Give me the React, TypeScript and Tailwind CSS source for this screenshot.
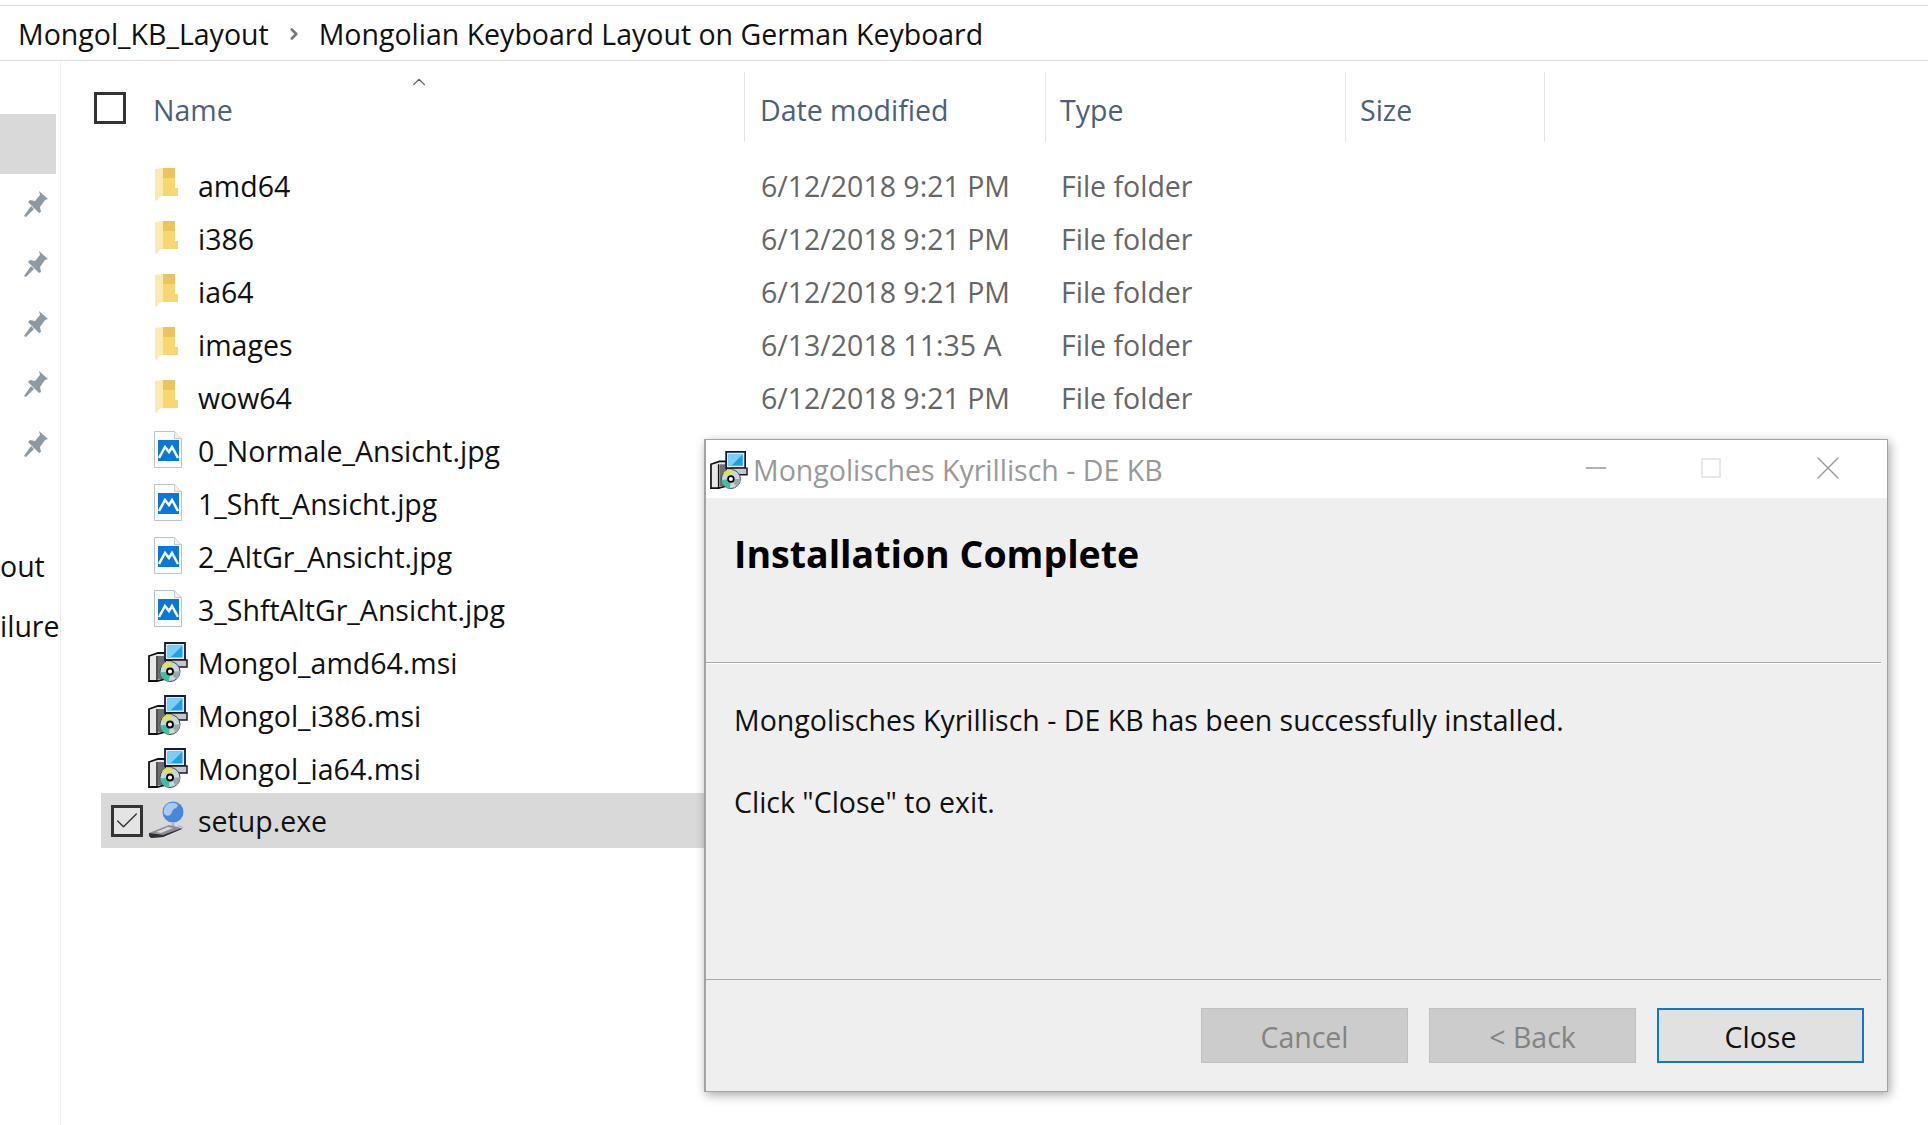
import { Check, ChevronRight, ChevronUp, Minus, X } from 'lucide-react'

type FileKind = 'folder' | 'image' | 'msi' | 'exe'

interface FileRow {
  name: string
  kind: FileKind
  date?: string
  type?: string
  selected?: boolean
}

const files: FileRow[] = [
  { name: 'amd64', kind: 'folder', date: '6/12/2018 9:21 PM', type: 'File folder' },
  { name: 'i386', kind: 'folder', date: '6/12/2018 9:21 PM', type: 'File folder' },
  { name: 'ia64', kind: 'folder', date: '6/12/2018 9:21 PM', type: 'File folder' },
  { name: 'images', kind: 'folder', date: '6/13/2018 11:35 A', type: 'File folder' },
  { name: 'wow64', kind: 'folder', date: '6/12/2018 9:21 PM', type: 'File folder' },
  { name: '0_Normale_Ansicht.jpg', kind: 'image' },
  { name: '1_Shft_Ansicht.jpg', kind: 'image' },
  { name: '2_AltGr_Ansicht.jpg', kind: 'image' },
  { name: '3_ShftAltGr_Ansicht.jpg', kind: 'image' },
  { name: 'Mongol_amd64.msi', kind: 'msi' },
  { name: 'Mongol_i386.msi', kind: 'msi' },
  { name: 'Mongol_ia64.msi', kind: 'msi' },
  { name: 'setup.exe', kind: 'exe', selected: true },
]

const FolderIcon = () => (
  <svg width="26" height="36" viewBox="0 0 26 36" className="ml-[6px]">
    <path d="M8 1h13v10H8z" fill="#ecc35f" />
    <path d="M8 11h13v10h3v8H8z" fill="#f8d672" />
    <path d="M1 2l8-1v28l-4 1-2 4-2-1z" fill="#fce9b0" />
  </svg>
)

const ImageIcon = () => (
  <svg width="28" height="37" viewBox="0 0 28 37" className="ml-[6px]">
    <path d="M.5.5h20l7 7v29H.5z" fill="#fbfdff" stroke="#b9c3cc" />
    <path d="M20.5.5v7h7" fill="#eef1f4" stroke="#c4ccd4" />
    <rect x="4" y="9" width="21" height="21" fill="#0a78d7" />
    <path d="M5 27l6-11 4 5 3-5 6 11" fill="none" stroke="#fff" strokeWidth="2.500" />
  </svg>
)

const InstallerIcon = ({ size = 40 }: { size?: number }) => (
  <svg width={size} height={size} viewBox="0 0 40 40">
    <path d="M1 14l9-3h7v26l-8 2H1z" fill="#e8e8e8" stroke="#111" strokeWidth="1.800" />
    <path d="M9 14v25" stroke="#111" strokeWidth="1.400" />
    <path d="M10 14h7v23h-7z" fill="#6f6f6f" />
    <path d="M17 1h20v17H17z" fill="#e4e9f3" stroke="#101a45" strokeWidth="1.800" />
    <rect x="19.500" y="3.500" width="15" height="12" fill="#1f9fe8" />
    <path d="M19.500 3.500h15l-12 12h-3z" fill="#79d0f6" />
    <path d="M23 18h16v7H23z" fill="#c6c6cf" stroke="#1c1c28" strokeWidth="1.500" />
    <circle cx="22" cy="29.500" r="10" fill="#c9d6da" stroke="#3f4a50" />
    <path d="M22 29.500L14 23.500a10 10 0 0 1 10-4z" fill="#dfe05f" />
    <path d="M22 29.500l-1 10a10 10 0 0 1-9-9z" fill="#3fbfa6" />
    <path d="M22 29.500l10 0a10 10 0 0 1-4 8z" fill="#9aa7ad" />
    <circle cx="22" cy="29.500" r="3" fill="#fff" stroke="#000" strokeWidth="1.800" />
  </svg>
)

const SetupIcon = () => (
  <svg width="40" height="40" viewBox="0 0 40 40">
    <circle cx="25" cy="12" r="10.500" fill="#4a86d8" />
    <path d="M18 5c4-3 9-3 12 0-1 4-5 3-6 7s-5 5-8 2c-1-3 0-6 2-9z" fill="#a9c9f0" />
    <path d="M25 22v6" stroke="#a7b4d8" strokeWidth="2.500" />
    <path d="M1 33l20-8 13 3-19 9-12 1z" fill="#8d8f94" />
    <path d="M1 33v3l2 2 12-1 19-8v-1l-19 7z" fill="#2e2e33" />
    <path d="M8 32l12-5 5 1-12 5z" fill="#d8d8dc" />
    <path d="M30 26l5 2" stroke="#b7b6ef" strokeWidth="2" />
  </svg>
)

const PinIcon = () => (
  <svg width="26" height="28" viewBox="0 0 26 28" className="ml-[23px]">
    <path d="M16 1l9 8-3 1-5 7 1 5-2 1-11-11 2-2 5 1 5-6z" fill="#8e9aa3" />
    <path d="M8 16L1 26l2 1 8-8z" fill="#8e9aa3" />
  </svg>
)

const fileIcons: Record<FileKind, React.ReactNode> = {
  folder: <FolderIcon />,
  image: <ImageIcon />,
  msi: <InstallerIcon />,
  exe: <SetupIcon />,
}

const Row = ({ file }: { file: FileRow }) => (
  <div
    className={
      file.selected
        ? 'flex h-[55px] w-[700px] -mt-[3px] items-center bg-[#d9d9d9] pt-[2px]'
        : 'flex h-[53px] items-center'
    }
  >
    <div className="w-[47px] shrink-0 pl-[10px] -mt-[2px]">
      {file.selected && (
        <div className="flex h-8 w-8 items-center justify-center border-[3px] border-[#333] bg-[#e4e4e4]">
          <Check size={28} strokeWidth={1.2} color="#333" className="shrink-0" />
        </div>
      )}
    </div>
    <div className="-mt-[4px] flex h-10 w-[50px] shrink-0 items-center">{fileIcons[file.kind]}</div>
    <div className="w-[563px] shrink-0 whitespace-nowrap text-[#111]">{file.name}</div>
    {file.date && <div className="w-[300px] shrink-0 text-[#666]">{file.date}</div>}
    {file.type && <div className="text-[#666]">{file.type}</div>}
  </div>
)

const Explorer = () => (
  <div className="h-[1125px] overflow-hidden bg-white font-['Open_Sans',sans-serif] text-[28.5px]">
    <div className="mt-[5px] flex h-[56px] items-center border-y border-[#dcdcdc] pl-[18px] pt-[2px] text-[#111]">
      <span>Mongol_KB_Layout</span>
      <ChevronRight size={18} strokeWidth={3.5} color="#777" className="mx-[16px]" />
      <span>Mongolian Keyboard Layout on German Keyboard</span>
    </div>

    <div className="flex">
      {/* Navigation pane, cut off by the crop */}
      <div className="h-[1064px] w-[61px] shrink-0 border-r border-[#f0f0f0] pt-[53px] text-[#111]">
        <div className="h-[60px] w-[56px] bg-[#d9d9d9]" />
        {[0, 1, 2, 3, 4].map((i) => (
          <div key={i} className="flex h-[60px] items-center">
            <PinIcon />
          </div>
        ))}
        <div className="mt-[62px] flex h-[60px] items-center overflow-hidden">out</div>
        <div className="flex h-[60px] items-center overflow-hidden">ilure</div>
      </div>

      <div className="flex-1">
        <div className="mt-[11px] flex h-[70px] items-center text-[#4c607a]">
          <div className="ml-[33px] mt-[2px] h-8 w-8 shrink-0 border-[3px] border-[#333]" />
          <div className="relative ml-[27px] flex h-full w-[592px] shrink-0 items-center border-r border-[#e5e5e5] pt-[7px]">
            Name
            <ChevronUp size={22} strokeWidth={1.2} color="#666" className="absolute left-[255px] top-[-1px]" />
          </div>
          <div className="flex h-full w-[301px] shrink-0 items-center border-r border-[#e5e5e5] pl-[15px] pt-[7px]">Date modified</div>
          <div className="flex h-full w-[300px] shrink-0 items-center border-r border-[#e5e5e5] pl-[14px] pt-[7px]">Type</div>
          <div className="flex h-full w-[199px] shrink-0 items-center border-r border-[#e5e5e5] pl-[14px] pt-[7px]">Size</div>
        </div>
        <div className="ml-[40px] mt-[18px]">
          {files.map((file) => (
            <Row key={file.name} file={file} />
          ))}
        </div>
      </div>
    </div>
  </div>
)

const DialogButton = ({ label, primary }: { label: string; primary?: boolean }) => (
  <div
    className={
      primary
        ? 'flex h-[55px] w-[207px] items-center justify-center border-2 border-[#0f78c8] bg-[#e1e1e1] pt-[4px] text-[#111]'
        : 'flex h-[55px] w-[207px] items-center justify-center border border-[#bfbfbf] bg-[#cccccc] pt-[4px] text-[#838383]'
    }
  >
    {label}
  </div>
)

const InstallDialog = () => (
  <div className="absolute left-[704px] top-[439px] flex h-[653px] w-[1184px] flex-col border border-l-2 border-[#a3a3a3] bg-[#efefef] font-['Open_Sans',sans-serif] text-[28.5px] shadow-[2px_3px_10px_rgba(0,0,0,0.35)]">
    <div className="flex h-[58px] shrink-0 items-center bg-white text-[#999]">
      <div className="ml-[4px] mr-[5px] mt-[1px]">
        <InstallerIcon size={38} />
      </div>
      <span className="pt-[2px]">Mongolisches Kyrillisch - DE KB</span>
      <Minus size={34} strokeWidth={0.9} color="#999" className="absolute left-[873px] top-[11px]" />
      <div className="absolute left-[995px] top-[18px] h-5 w-5 border-2 border-[#e8e8e8]" />
      <X size={40} strokeWidth={0.8} color="#999" className="absolute left-[1102px] top-[8px]" />
    </div>

    <div className="mr-[6px] flex h-[165px] shrink-0 items-start border-b border-[#a9a9a9] pl-[28px] pt-[31px]">
      <span className="text-[37.500px] font-bold leading-[50px] text-black">Installation Complete</span>
    </div>

    <div className="mr-[6px] flex h-[317px] shrink-0 flex-col border-t border-b border-t-white border-b-[#a9a9a9] pl-[28px] pt-[36px] text-[#111]">
      <div className="h-[82px] leading-[40px]">Mongolisches Kyrillisch - DE KB has been successfully installed.</div>
      <div className="leading-[40px]">Click "Close" to exit.</div>
    </div>

    <div className="flex flex-1 items-start justify-end gap-[21px] pr-[23px] pt-[28px]">
      <DialogButton label="Cancel" />
      <DialogButton label="< Back" />
      <DialogButton label="Close" primary />
    </div>
  </div>
)

const App = () => (
  <div className="relative h-[1125px] w-full overflow-hidden bg-white">
    <Explorer />
    <InstallDialog />
  </div>
)

export default App
